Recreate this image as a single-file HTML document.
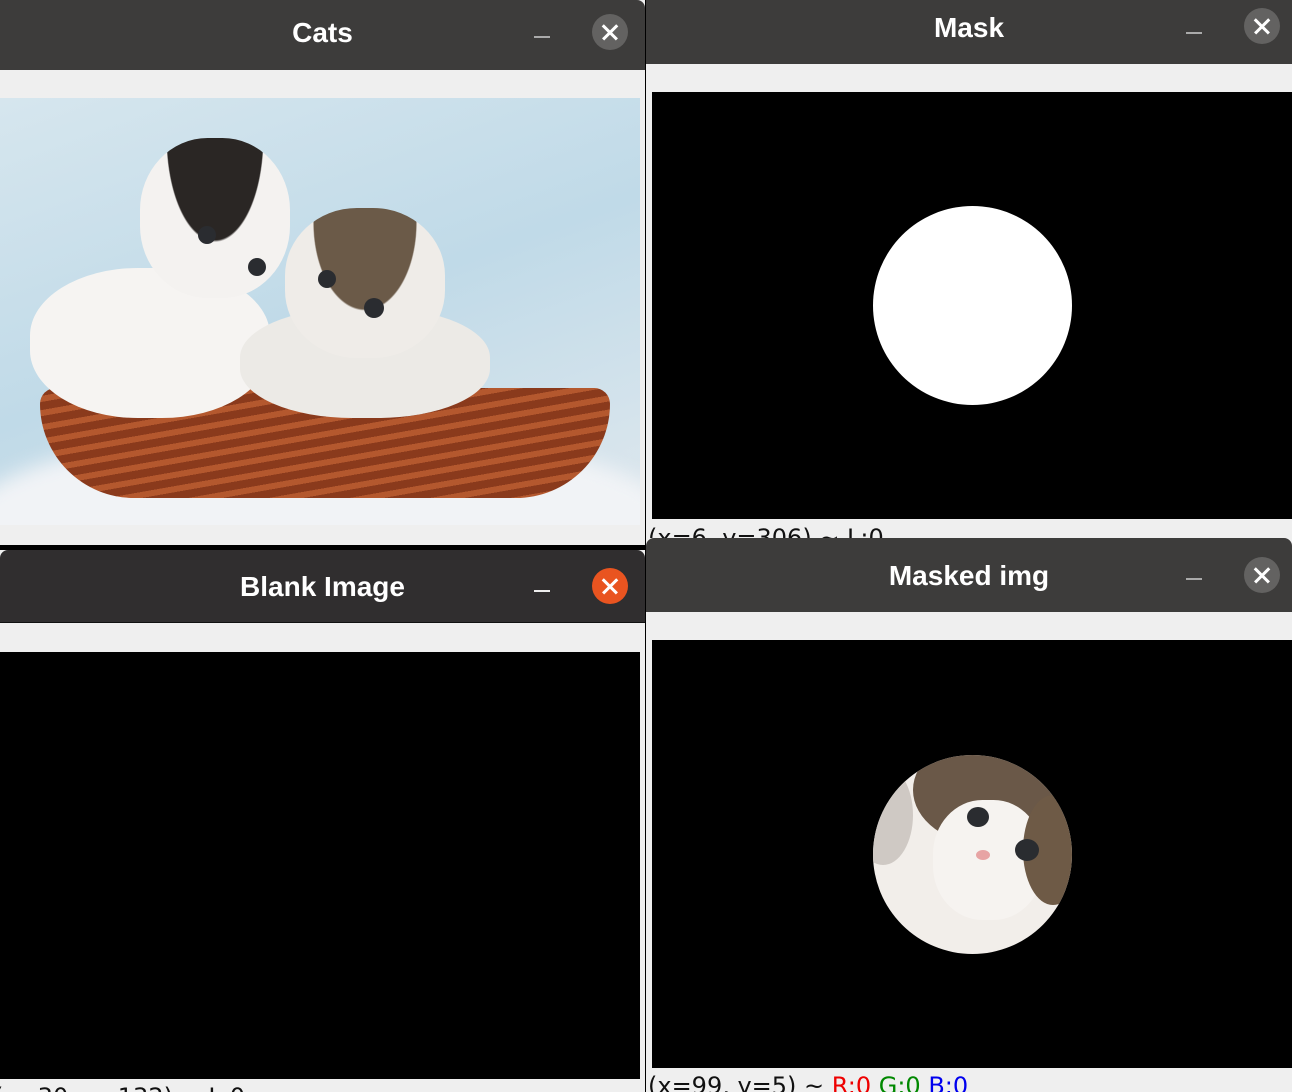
<!DOCTYPE html>
<html><head><meta charset="utf-8"><style>
*{margin:0;padding:0;box-sizing:border-box}
body{width:1292px;height:1092px;background:#000;position:relative;overflow:hidden;font-family:"Liberation Sans","DejaVu Sans",sans-serif}
.win{position:absolute;background:#efefef;overflow:hidden}
.tb{position:absolute;left:0;right:0;top:0;background:#3d3c3b;color:#fff;font-weight:bold;font-size:28px;text-align:center;border-radius:8px 8px 0 0}
.min{position:absolute;width:16px;height:2px;background:#aaa}
.cl{position:absolute;width:36px;height:36px;border-radius:50%;background:#636261}
.cl:before,.cl:after{content:"";position:absolute;left:8px;top:17px;width:20px;height:2.5px;background:#fff;transform:rotate(45deg)}
.cl:after{transform:rotate(-45deg)}
.blk{position:absolute;background:#000}
.st{position:absolute;font-size:24px;color:#111;white-space:nowrap;font-family:"DejaVu Sans",sans-serif}
.e{position:absolute;border-radius:50%;background:#2a2c30}
</style></head><body>
<!-- Cats -->
<div class="win" style="left:0;top:0;width:645px;height:545px">
 <div class="tb" style="height:70px;line-height:66px;border-radius:0 8px 0 0">Cats</div>
 <div class="min" style="left:534px;top:36px"></div>
 <div class="cl" style="left:592px;top:14px"></div>
 <div style="position:absolute;left:0;top:98px;width:640px;height:427px;overflow:hidden;background:linear-gradient(160deg,#d6e6ee,#c0dae8 50%,#dfe8ee)">
  <div style="position:absolute;left:-40px;top:330px;width:720px;height:200px;border-radius:50%;background:#f1f3f6;filter:blur(10px)"></div>
  <div style="position:absolute;left:40px;top:290px;width:570px;height:110px;border-radius:20px 20px 120px 120px;background:repeating-linear-gradient(170deg,#8a3a1c 0 8px,#b4582e 8px 14px)"></div>
  <div style="position:absolute;left:30px;top:170px;width:240px;height:150px;border-radius:45%;background:#f6f4f2"></div>
  <div style="position:absolute;left:140px;top:40px;width:150px;height:160px;border-radius:45%;background:radial-gradient(ellipse at 50% 0%,#2a2624 0 45%,#f4f2f0 46%)"></div>
  <div style="position:absolute;left:240px;top:210px;width:250px;height:110px;border-radius:45%;background:#eceae6"></div>
  <div style="position:absolute;left:285px;top:110px;width:160px;height:150px;border-radius:45%;background:radial-gradient(ellipse at 50% 10%,#6b5a48 0 45%,#efece8 46%)"></div>
  <div class="e" style="left:198px;top:128px;width:18px;height:18px"></div>
  <div class="e" style="left:248px;top:160px;width:18px;height:18px"></div>
  <div class="e" style="left:318px;top:172px;width:18px;height:18px"></div>
  <div class="e" style="left:364px;top:200px;width:20px;height:20px"></div>
 </div>
</div>
<!-- Mask -->
<div class="win" style="left:646px;top:0;width:646px;height:538px">
 <div class="tb" style="height:64px;line-height:56px;border-radius:0">Mask</div>
 <div class="min" style="left:540px;top:32px"></div>
 <div class="cl" style="left:598px;top:8px"></div>
 <div class="blk" style="left:6px;top:92px;width:640px;height:427px"></div>
 <div style="position:absolute;left:227px;top:206px;width:199px;height:199px;border-radius:50%;background:#fff"></div>
 <div class="st" style="left:2px;top:524px">(x=6, y=306) ~ L:0</div>
</div>
<!-- Blank -->
<div class="win" style="left:0;top:550px;width:645px;height:542px">
 <div class="tb" style="height:73px;line-height:74px;background:#302e2f;border-bottom:1px solid #111">Blank Image</div>
 <div class="min" style="left:534px;top:40px;background:#eee"></div>
 <div class="cl" style="left:592px;top:18px;background:#e95420"></div>
 <div class="blk" style="left:0;top:102px;width:640px;height:427px"></div>
 <div class="st" style="left:-6px;top:533px">(x=30, y=132) ~ L:0</div>
</div>
<!-- Masked -->
<div class="win" style="left:646px;top:538px;width:646px;height:554px">
 <div class="tb" style="height:74px;line-height:76px">Masked img</div>
 <div class="min" style="left:540px;top:40px"></div>
 <div class="cl" style="left:598px;top:19px"></div>
 <div class="blk" style="left:6px;top:102px;width:640px;height:428px"></div>
 <div style="position:absolute;left:227px;top:217px;width:199px;height:199px;border-radius:50%;overflow:hidden;background:#f2eeea">
  <div style="position:absolute;left:40px;top:-20px;width:150px;height:110px;border-radius:50%;background:#6a5848"></div>
  <div style="position:absolute;left:-20px;top:10px;width:60px;height:100px;border-radius:50%;background:#cfc9c4"></div>
  <div style="position:absolute;left:60px;top:45px;width:110px;height:120px;border-radius:45%;background:#f6f3f0"></div>
  <div style="position:absolute;left:150px;top:40px;width:60px;height:110px;border-radius:50%;background:#6e5a46"></div>
  <div class="e" style="left:94px;top:52px;width:22px;height:20px"></div>
  <div class="e" style="left:142px;top:84px;width:24px;height:22px"></div>
  <div style="position:absolute;left:103px;top:95px;width:14px;height:10px;border-radius:50%;background:#e7a4a4"></div>
 </div>
 <div class="st" style="left:2px;top:534px">(x=99, y=5) ~ <span style="color:#e00">R:0</span> <span style="color:#080">G:0</span> <span style="color:#00e">B:0</span></div>
</div>
</body></html>
